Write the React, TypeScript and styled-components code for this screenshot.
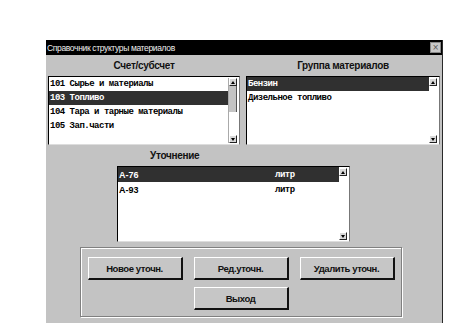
import React from 'react';
import styled, { createGlobalStyle } from 'styled-components';

const GlobalStyle = createGlobalStyle`
  html, body {
    margin: 0;
    padding: 0;
    background: #ffffff;
  }
`;

const Window = styled.div`
  margin: 40px 0 0 46px;
  width: 397px;
  height: 283px;
  background: #c3c3c3;
  border-right: 1px solid #2a2a2a;
  display: flex;
  flex-direction: column;
  box-sizing: border-box;
`;

const TitleBar = styled.div`
  height: 15px;
  background: #000;
  color: #eee;
  display: flex;
  align-items: center;
  justify-content: space-between;
  padding: 0 1px 0 1px;
  font-family: "Liberation Sans", sans-serif;
  font-size: 8.5px;
  letter-spacing: -0.35px;
`;

const CloseBox = styled.div`
  width: 9px;
  height: 9px;
  background: #c8c8c8;
  border: 1px solid #888;
  color: #555;
  font-family: "DejaVu Sans", sans-serif;
  font-size: 8px;
  line-height: 9px;
  text-align: center;
`;

const Body = styled.div`
  flex: 1;
  padding: 0 3px 0 2px;
  display: flex;
  flex-direction: column;
`;

const TopGrid = styled.div`
  display: grid;
  grid-template-columns: 192px 194px;
  column-gap: 6px;
`;

const Label = styled.div<{ $pad?: number }>`
  height: 21px;
  display: flex;
  align-items: center;
  justify-content: ${p => (p.$pad !== undefined ? 'flex-start' : 'center')};
  padding-left: ${p => p.$pad ?? 0}px;
  font-family: "Liberation Sans", sans-serif;
  font-weight: bold;
  font-size: 10px;
  letter-spacing: -0.3px;
  color: #111;
`;

const ListBox = styled.div<{ $h: number }>`
  height: ${p => p.$h}px;
  background: #fff;
  border-top: 1px solid #000;
  border-left: 1px solid #000;
  border-right: 1px solid #777;
  border-bottom: 1px solid #ddd;
  display: flex;
  box-sizing: border-box;
`;

const Rows = styled.div`
  flex: 1;
  display: flex;
  flex-direction: column;
`;

const Row = styled.div<{ $sel?: boolean; $h: number }>`
  height: ${p => p.$h}px;
  display: flex;
  align-items: center;
  padding-left: 1px;
  background: ${p => (p.$sel ? '#303030' : 'transparent')};
  color: ${p => (p.$sel ? '#fff' : '#000')};
  font-family: "Liberation Mono", monospace;
  font-weight: bold;
  font-size: 9px;
  letter-spacing: -0.5px;
  white-space: nowrap;
`;

const Cell = styled.span<{ $w?: number; $sans?: boolean }>`
  width: ${p => (p.$w ? `${p.$w}px` : 'auto')};
  font-family: ${p => (p.$sans ? '"Liberation Sans", sans-serif' : '"Liberation Mono", monospace')};
  letter-spacing: ${p => (p.$sans ? '0' : '-0.5px')};
`;

const ScrollBar = styled.div<{ $track?: boolean }>`
  width: 9px;
  margin: 1px 1px 1px 0;
  display: flex;
  flex-direction: column;
  justify-content: space-between;
  background: ${p => (p.$track ? '#fff' : 'transparent')};
  border-left: ${p => (p.$track ? '1px solid #aaa' : 'none')};
`;

const Arrow = styled.div`
  width: 8px;
  height: 8px;
  background: #d8d8d8;
  border-top: 1px solid #fff;
  border-left: 1px solid #fff;
  border-right: 1px solid #222;
  border-bottom: 1px solid #222;
  box-sizing: border-box;
  display: flex;
  align-items: center;
  justify-content: center;
`;

const Tri = styled.div<{ $down?: boolean }>`
  width: 0;
  height: 0;
  border-left: 2px solid transparent;
  border-right: 2px solid transparent;
  ${p => (p.$down ? 'border-top: 3px solid #000;' : 'border-bottom: 3px solid #000;')}
`;

const Thumb = styled.div`
  height: 26px;
  width: 8px;
  background: #c4c4c4;
  border-right: 1px solid #555;
  box-sizing: border-box;
`;

const TrackTop = styled.div`
  display: flex;
  flex-direction: column;
`;

const Middle = styled.div`
  margin-left: 69px;
  width: 233px;
  display: flex;
  flex-direction: column;
`;

const GroupBox = styled.div`
  margin: 5px 0 0 32px;
  width: 322px;
  height: 70px;
  box-sizing: border-box;
  border: 1px solid #808080;
  box-shadow: inset 1px 1px 0 #fff, 1px 1px 0 #fff;
  display: flex;
  flex-direction: column;
  align-items: center;
  padding-top: 9px;
  gap: 7px;
`;

const ButtonRow = styled.div`
  display: flex;
  gap: 11px;
`;

const Button = styled.div`
  width: 95px;
  height: 23px;
  box-sizing: border-box;
  background: #c6c6c6;
  border-top: 1px solid #fff;
  border-left: 1px solid #fff;
  border-right: 2px solid #111;
  border-bottom: 2px solid #111;
  display: flex;
  align-items: center;
  justify-content: center;
  font-family: "Liberation Sans", sans-serif;
  font-weight: bold;
  font-size: 9.5px;
  letter-spacing: -0.4px;
  color: #111;
`;

const Scroll = ({ thumb, track }: { thumb?: boolean; track?: boolean }) => (
  <ScrollBar $track={track}>
    <TrackTop>
      <Arrow><Tri /></Arrow>
      {thumb && <Thumb />}
    </TrackTop>
    <Arrow><Tri $down /></Arrow>
  </ScrollBar>
);

const accounts = [
  { code: '101 Сырье и материалы' },
  { code: '103 Топливо', sel: true },
  { code: '104 Тара и тарные материалы' },
  { code: '105 Зап.части' },
];

const groups = [
  { name: 'Бензин', sel: true },
  { name: 'Дизельное топливо' },
];

const specs = [
  { name: 'А-76', unit: 'литр', sel: true },
  { name: 'А-93', unit: 'литр' },
];

const App = () => (
  <>
    <GlobalStyle />
    <Window>
      <TitleBar>
        <span>Справочник структуры материалов</span>
        <CloseBox>×</CloseBox>
      </TitleBar>
      <Body>
        <TopGrid>
          <Label>Счет/субсчет</Label>
          <Label>Группа материалов</Label>
          <ListBox $h={69}>
            <Rows>
              {accounts.map(a => (
                <Row key={a.code} $h={14} $sel={a.sel}>{a.code}</Row>
              ))}
            </Rows>
            <Scroll thumb track />
          </ListBox>
          <ListBox $h={69}>
            <Rows>
              {groups.map(g => (
                <Row key={g.name} $h={14} $sel={g.sel}>{g.name}</Row>
              ))}
            </Rows>
            <Scroll />
          </ListBox>
        </TopGrid>
        <Middle>
          <Label $pad={33}>Уточнение</Label>
          <ListBox $h={76}>
            <Rows>
              {specs.map(s => (
                <Row key={s.name} $h={15} $sel={s.sel}>
                  <Cell $w={156} $sans>{s.name}</Cell>
                  <Cell>{s.unit}</Cell>
                </Row>
              ))}
            </Rows>
            <Scroll />
          </ListBox>
        </Middle>
        <GroupBox>
          <ButtonRow>
            <Button>Новое уточн.</Button>
            <Button>Ред.уточн.</Button>
            <Button>Удалить уточн.</Button>
          </ButtonRow>
          <Button>Выход</Button>
        </GroupBox>
      </Body>
    </Window>
  </>
);

export default App;
